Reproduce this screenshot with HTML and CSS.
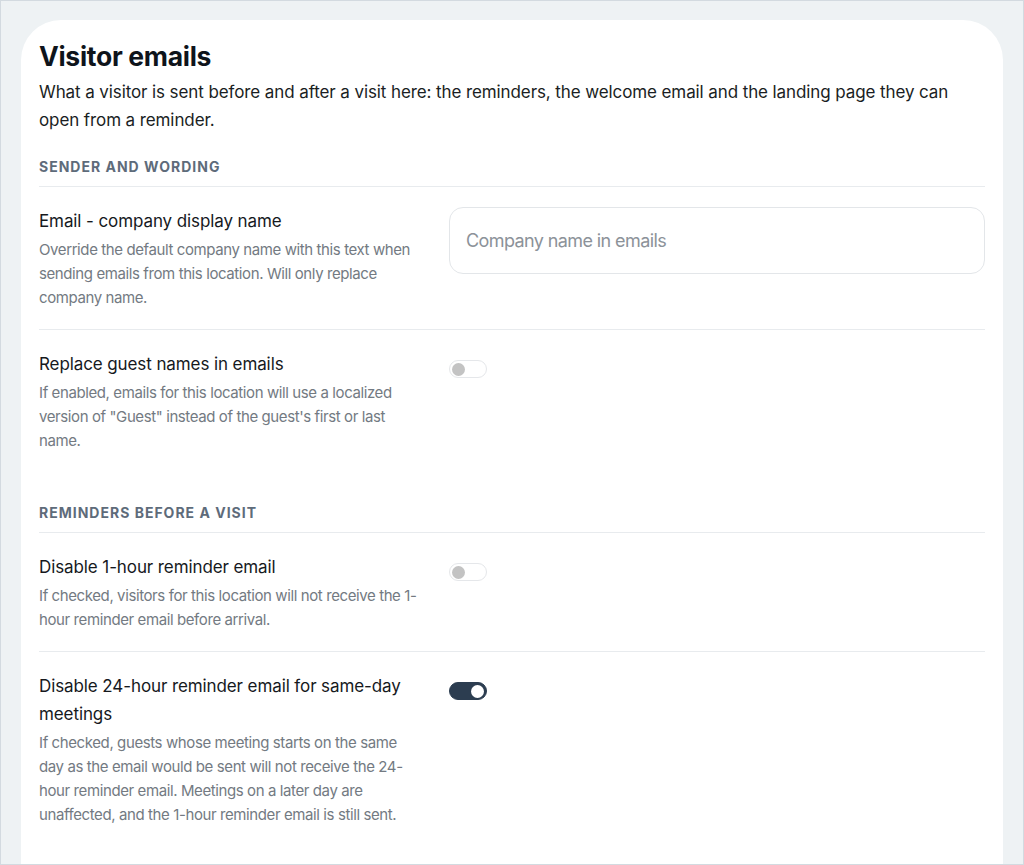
FILE: index.html
```html
<!DOCTYPE html>
<html lang="en">
<head>
<meta charset="utf-8">
<title>Visitor emails</title>
<link rel="stylesheet" href="styles.css">
</head>
<body>
<div class="page">
  <main class="card">
    <h1 class="title">Visitor emails</h1>
    <p class="intro">What a visitor is sent before and after a visit here: the reminders, the welcome email and the landing page they can open from a reminder.</p>

    <section class="group">
      <h2 class="group-label">Sender and wording</h2>
      <div class="row">
        <div class="row-text">
          <div class="row-title">Email - company display name</div>
          <p class="row-desc">Override the default company name with this text when sending emails from this location. Will only replace company name.</p>
        </div>
        <div class="row-control">
          <input class="text-input" type="text" placeholder="Company name in emails">
        </div>
      </div>
      <div class="row">
        <div class="row-text">
          <div class="row-title">Replace guest names in emails</div>
          <p class="row-desc">If enabled, emails for this location will use a localized version of "Guest" instead of the guest's first or last name.</p>
        </div>
        <div class="row-control">
          <span class="toggle"><span class="knob"></span></span>
        </div>
      </div>
    </section>

    <section class="group">
      <h2 class="group-label">Reminders before a visit</h2>
      <div class="row">
        <div class="row-text">
          <div class="row-title">Disable 1-hour reminder email</div>
          <p class="row-desc">If checked, visitors for this location will not receive the 1-hour reminder email before arrival.</p>
        </div>
        <div class="row-control">
          <span class="toggle"><span class="knob"></span></span>
        </div>
      </div>
      <div class="row">
        <div class="row-text">
          <div class="row-title">Disable 24-hour reminder email for same-day meetings</div>
          <p class="row-desc">If checked, guests whose meeting starts on the same day as the email would be sent will not receive the 24-hour reminder email. Meetings on a later day are unaffected, and the 1-hour reminder email is still sent.</p>
        </div>
        <div class="row-control">
          <span class="toggle on"><span class="knob"></span></span>
        </div>
      </div>
    </section>
  </main>
</div>
</body>
</html>
```
FILE: styles.css
```css
* { box-sizing: border-box; }
html, body { margin: 0; padding: 0; }
body {
  background: #eef2f4;
  font-family: Inter, "Noto Sans", sans-serif;
  color: #16191d;
}
.page {
  height: 100vh;
  overflow: hidden;
  border: 1px solid #d3dae0;
  padding: 19px 20px 0 20px;
}
.card {
  background: #ffffff;
  border-radius: 40px 40px 0 0;
  padding: 20px 18px 40px 18px;
  min-height: 900px;
}
.title {
  margin: 0;
  font-size: 26.5px;
  line-height: 32px;
  font-weight: 700;
  letter-spacing: -0.3px;
  color: #0e141b;
}
.intro {
  margin: 6px 0 0 0;
  font-size: 17px;
  line-height: 28px;
  letter-spacing: -0.1px;
  color: #1a1e23;
}
.group { margin-top: 23px; }
.group + .group { margin-top: 31px; }
.group-label {
  margin: 0;
  font-size: 14px;
  line-height: 20px;
  font-weight: 700;
  letter-spacing: 1px;
  text-transform: uppercase;
  color: #5e6b7a;
  padding-bottom: 9px;
  border-bottom: 1px solid #e8ebee;
}
.row {
  display: grid;
  grid-template-columns: 382px 1fr;
  column-gap: 28px;
  padding: 20px 0 19px 0;
  border-bottom: 1px solid #e8ebee;
}
.row:last-child { border-bottom: none; }
.row-title {
  font-size: 17px;
  line-height: 28px;
  letter-spacing: -0.1px;
  color: #16191d;
}
.row-desc {
  margin: 3px 0 0 0;
  font-size: 15px;
  line-height: 24px;
  letter-spacing: -0.4px;
  color: #737a82;
}
.text-input {
  display: block;
  width: 100%;
  height: 67px;
  border: 1px solid #e3e6e9;
  border-radius: 14px;
  padding: 0 16px;
  font-family: inherit;
  font-size: 18px;
  letter-spacing: -0.6px;
  color: #16191d;
  background: #fff;
  outline: none;
}
.text-input::placeholder { color: #8c9299; }
.toggle {
  display: flex;
  align-items: center;
  width: 38px;
  height: 18px;
  margin-top: 10px;
  border-radius: 9px;
  border: 1px solid #e5e7ea;
  background: #ffffff;
  padding: 0 2px;
}
.knob {
  width: 13px;
  height: 13px;
  border-radius: 50%;
  background: #c3c3c3;
}
.toggle.on {
  background: #2c3d50;
  border-color: #2c3d50;
  justify-content: flex-end;
}
.toggle.on .knob { background: #ffffff; }
```
